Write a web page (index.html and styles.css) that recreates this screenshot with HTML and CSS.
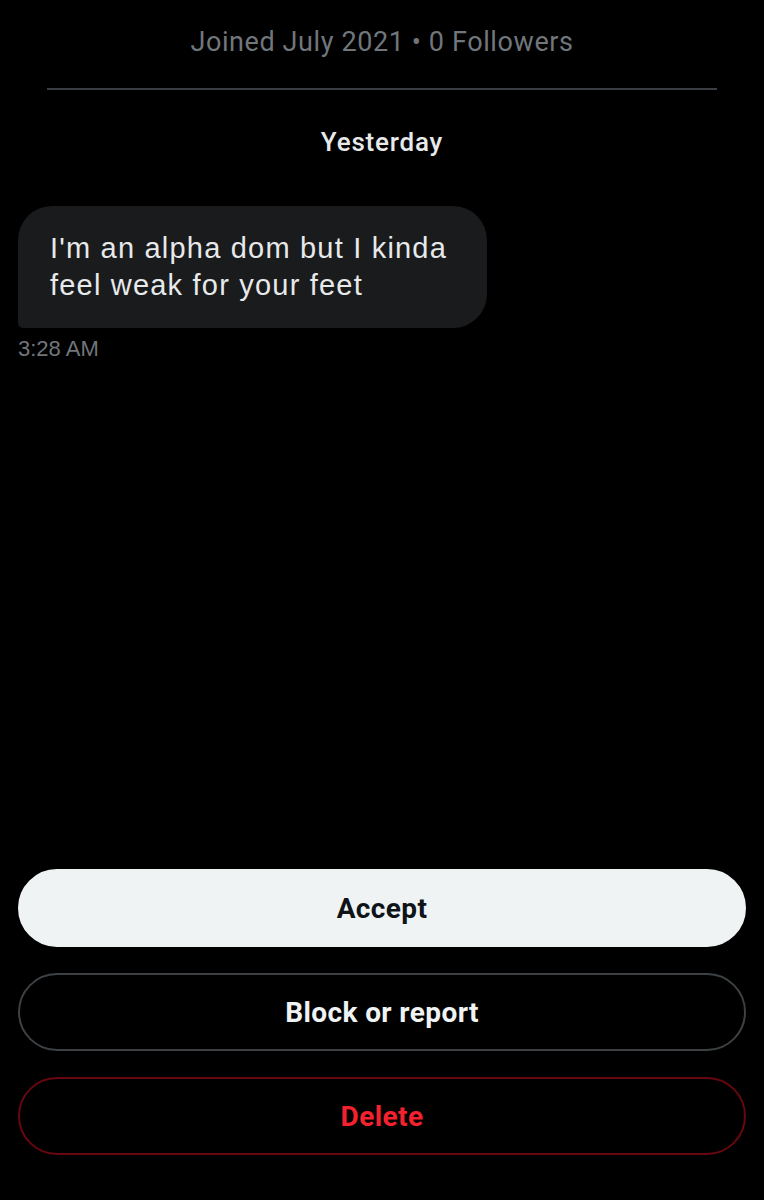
FILE: index.html
```html
<!DOCTYPE html>
<html lang="en">
<head>
  <meta charset="UTF-8" />
  <meta name="viewport" content="width=device-width, initial-scale=1.0"/>
  <title>Message request</title>
  <link rel="stylesheet" href="styles.css">
</head>
<body>
  <div class="screen">
    <div class="profile-meta">Joined July 2021 &bull; 0 Followers</div>
    <hr class="divider">

    <div class="day-label">Yesterday</div>

    <div class="thread">
      <div class="bubble">I'm an alpha dom but I kinda feel weak for your feet</div>
      <div class="msg-time">3:28 AM</div>
    </div>

    <div class="actions">
      <button class="btn btn-accept">Accept</button>
      <button class="btn btn-block">Block or report</button>
      <button class="btn btn-delete">Delete</button>
    </div>
  </div>
</body>
</html>
```

FILE: styles.css
```css
* { box-sizing: border-box; }
body {
  margin: 0;
  padding: 0;
  background: #000;
  color: #e7e9ea;
  font-family: Roboto, "Liberation Sans", sans-serif;
}
.screen {
  height: 1200px;
  display: flex;
  flex-direction: column;
  padding: 0 18px 45px;
}
.profile-meta {
  text-align: center;
  color: #71767b;
  font-size: 27px;
  letter-spacing: 0.6px;
  line-height: 30px;
  margin-top: 27px;
}
.divider {
  border: none;
  height: 2px;
  background: #3a3d41;
  margin: 31px 29px 0;
}
.day-label {
  text-align: center;
  font-size: 26px;
  font-weight: 500;
  letter-spacing: 0.8px;
  line-height: 28px;
  margin-top: 38px;
  color: #e7e9ea;
}
.thread {
  margin-top: 50px;
}
.bubble {
  width: 469px;
  background: #1a1b1d;
  color: #e7e9ea;
  font-family: "Liberation Sans", Arial, sans-serif;
  font-size: 29px;
  letter-spacing: 1.2px;
  line-height: 37px;
  padding: 24px 24px 24px 32px;
  border-radius: 34px 34px 34px 5px;
}
.msg-time {
  color: #71767b;
  font-family: "Liberation Sans", Arial, sans-serif;
  font-size: 22px;
  line-height: 24px;
  margin-top: 9px;
}
.actions {
  margin-top: auto;
  display: flex;
  flex-direction: column;
  gap: 26px;
}
.btn {
  height: 78px;
  border-radius: 39px;
  font-family: Roboto, "Liberation Sans", sans-serif;
  font-size: 28px;
  font-weight: 700;
  letter-spacing: 0.4px;
  background: #000;
  border: 2px solid #3e4144;
  color: #eff3f4;
}
.btn-accept {
  background: #eff3f4;
  border-color: #eff3f4;
  color: #0f1419;
}
.btn-delete {
  border-color: #67070f;
  color: #f4212e;
}
```
